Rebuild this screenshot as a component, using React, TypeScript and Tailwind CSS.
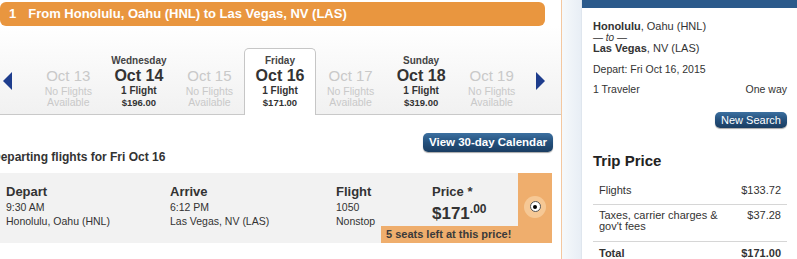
import React from "react";

type Day = { name?: string; d: string; avail: boolean; price?: string; sel?: boolean };

const days: Day[] = [
  { d: "Oct 13", avail: false },
  { name: "Wednesday", d: "Oct 14", avail: true, price: "$196.00" },
  { d: "Oct 15", avail: false },
  { name: "Friday", d: "Oct 16", avail: true, price: "$171.00", sel: true },
  { d: "Oct 17", avail: false },
  { name: "Sunday", d: "Oct 18", avail: true, price: "$319.00" },
  { d: "Oct 19", avail: false },
];

function DayCol({ day }: { day: Day }) {
  const base =
    "h-[67px] flex flex-col items-center border border-b-0 rounded-t-[5px] pt-[5.5px] text-center";
  const cls = day.sel
    ? base + " bg-white border-[#c6c6c6] mx-[-1px]"
    : base + " border-transparent";
  if (!day.avail) {
    return (
      <div className={cls}>
        <div className="h-[12px]" />
        <div className="text-[15px] leading-[18px] text-[#c9c9c9]">{day.d}</div>
        <div className="text-[10.5px] leading-[12px] text-[#c9c9c9]">No Flights</div>
        <div className="text-[10.5px] leading-[11px] text-[#c9c9c9]">Available</div>
      </div>
    );
  }
  return (
    <div className={cls}>
      <div className="text-[10px] font-bold leading-[12px] text-[#444]">{day.name}</div>
      <div className="text-[16px] font-bold leading-[18px] text-[#333]">{day.d}</div>
      <div className="text-[10px] font-bold leading-[12px] text-[#333]">1 Flight</div>
      <div className="text-[9.5px] font-bold leading-[11px] text-[#333]">{day.price}</div>
    </div>
  );
}

function BlueButton({ children, className }: { children: React.ReactNode; className: string }) {
  return (
    <div
      className={
        "flex items-center justify-center whitespace-nowrap rounded-[5px] bg-linear-to-b from-[#3c70a0] via-[#24507c] to-[#1a3d62] text-white shadow-[0_1px_1px_rgba(0,0,0,0.35)] " +
        className
      }
    >
      {children}
    </div>
  );
}

export default function App() {
  return (
    <div className="flex h-[259px] w-[797px] overflow-hidden bg-white font-['Liberation_Sans',Arial,sans-serif] text-[#333]">
      {/* Left pane */}
      <div className="w-[561px] shrink-0">
        <div className="mt-[2px] flex h-[24px] w-[545px] items-center rounded-[6px] bg-[#e9963f] pl-[9px] text-[13px] font-bold text-white">
          <span>1</span>
          <span className="ml-[12px]">From Honolulu, Oahu (HNL) to Las Vegas, NV (LAS)</span>
        </div>

        <div className="h-[89px] border-b border-[#c9c9c9] bg-linear-to-b from-[#ffffff] to-[#f1f1f1] pt-[22px]">
          <div className="flex items-start">
            <div className="w-[33px] pl-[3px] pt-[24px]">
              <svg width="9" height="18" viewBox="0 0 9 18">
                <polygon points="9,0 9,18 0,9" fill="#1e3d8d" />
              </svg>
            </div>
            <div className="grid w-[494px] grid-cols-7">
              {days.map((d) => (
                <DayCol key={d.d} day={d} />
              ))}
            </div>
            <div className="pl-[9px] pt-[24px]">
              <svg width="9" height="18" viewBox="0 0 9 18">
                <polygon points="0,0 0,18 9,9" fill="#1e3d8d" />
              </svg>
            </div>
          </div>
        </div>

        <div className="mr-[8px] mt-[18px] flex justify-end">
          <BlueButton className="h-[19px] w-[130px] text-[11.5px] font-bold">View 30-day Calendar</BlueButton>
        </div>
        <div className="-ml-[8px] mt-[-2px] whitespace-nowrap text-[12px] font-bold leading-[14px] text-[#333]">
          Departing flights for Fri Oct 16
        </div>

        <div className="mt-[8.5px] flex h-[70px] w-[552px] bg-[#f2f2f2]">
          <div className="relative flex flex-1 pt-[11.5px]">
            <div className="w-[170px] pl-[6px]">
              <div className="text-[13px] font-bold leading-[16px]">Depart</div>
              <div className="text-[10.5px] leading-[14px]">9:30 AM</div>
              <div className="text-[10.5px] leading-[14px]">Honolulu, Oahu (HNL)</div>
            </div>
            <div className="w-[166px]">
              <div className="text-[13px] font-bold leading-[16px]">Arrive</div>
              <div className="text-[10.5px] leading-[14px]">6:12 PM</div>
              <div className="text-[10.5px] leading-[14px]">Las Vegas, NV (LAS)</div>
            </div>
            <div className="w-[96px]">
              <div className="text-[13px] font-bold leading-[16px]">Flight</div>
              <div className="text-[10.5px] leading-[14px]">1050</div>
              <div className="text-[10.5px] leading-[14px]">Nonstop</div>
            </div>
            <div className="flex-1">
              <div className="text-[13px] font-bold leading-[16px]">Price *</div>
              <div className="mt-[3.5px] text-[17px] font-bold leading-[20px]">
                $171<sup className="text-[12px]">.00</sup>
              </div>
            </div>
            <div className="absolute bottom-0 right-0 h-[17px] w-[137px] whitespace-nowrap bg-[#efae6d] pl-[5px] text-[11px] font-bold leading-[16px] text-[#3a3a3a]">
              5 seats left at this price!
            </div>
          </div>
          <div className="flex w-[34px] items-center justify-center bg-[#efae6d] pb-[2px]">
            <div className="flex h-[22px] w-[22px] items-center justify-center rounded-full bg-[#f6c895]">
              <div className="flex h-[11px] w-[11px] items-center justify-center rounded-full border border-[#555] bg-white">
                <div className="h-[4px] w-[4px] rounded-full bg-black" />
              </div>
            </div>
          </div>
        </div>
      </div>

      {/* divider + gutter */}
      <div className="w-px shrink-0 bg-[#f4c8a0]" />
      <div className="w-[20px] shrink-0 border-r border-[#dfe6ee] bg-linear-to-r from-[#f6f9fb] to-[#e8eef5]" />

      {/* Right panel */}
      <div className="w-[215px] shrink-0 bg-white">
        <div className="h-[8px] bg-[#2b5a8b]" />
        <div className="pl-[11px] pr-[10px] pt-[12.7px]">
          <div className="text-[11px] leading-[11px]">
            <span className="font-bold">Honolulu</span>, Oahu (HNL)
          </div>
          <div className="text-[10px] italic leading-[11px]">— to —</div>
          <div className="text-[11px] leading-[11px]">
            <span className="font-bold">Las Vegas</span>, NV (LAS)
          </div>
          <div className="mt-[9.5px] text-[10.5px] leading-[13px]">Depart: Fri Oct 16, 2015</div>
          <div className="mt-[6.5px] flex justify-between text-[10.5px] leading-[13px]">
            <span>1 Traveler</span>
            <span>One way</span>
          </div>
          <div className="mt-[16.5px] flex justify-end">
            <BlueButton className="h-[16px] w-[72px] text-[11px]">New Search</BlueButton>
          </div>
          <div className="mt-[23.5px] text-[15px] font-bold leading-[18px] text-[#222]">Trip Price</div>
          <div className="mt-[10.5px] text-[11px] leading-[11px]">
            <div className="flex justify-between border-b border-[#d6d6d6] px-[6px] pb-[8px] pt-[5px]">
              <span>Flights</span>
              <span>$133.72</span>
            </div>
            <div className="flex justify-between border-b border-[#d6d6d6] px-[6px] pb-[9px] pt-[5px]">
              <span className="w-[130px]">Taxes, carrier charges &amp; gov't fees</span>
              <span>$37.28</span>
            </div>
            <div className="flex justify-between px-[6px] pt-[6px] font-bold">
              <span>Total</span>
              <span>$171.00</span>
            </div>
          </div>
        </div>
      </div>
    </div>
  );
}
